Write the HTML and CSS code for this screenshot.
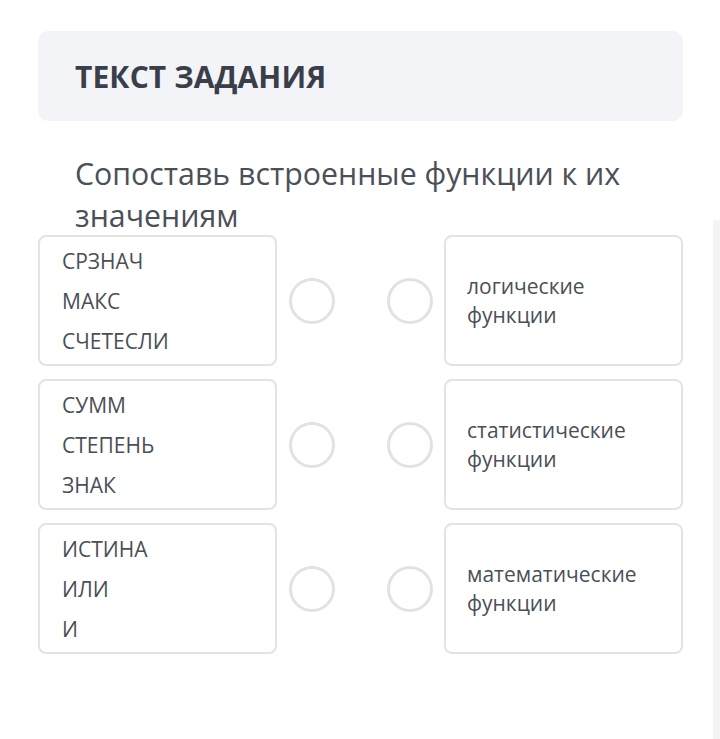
FILE: index.html
```html
<!DOCTYPE html>
<html lang="ru">
<head>
    <meta charset="UTF-8">
    <meta name="viewport" content="width=device-width, initial-scale=1.0">
    <title>Текст задания</title>
    <link rel="stylesheet" href="styles.css">
</head>
<body>
    <div class="page">
        <div class="task-header">
            <h1>ТЕКСТ ЗАДАНИЯ</h1>
        </div>

        <p class="question">Сопоставь встроенные функции к их значениям</p>

        <!-- Пары для сопоставления -->
        <div class="pairs">
            <div class="pair">
                <div class="card card-left">
                    <span>СРЗНАЧ</span>
                    <span>МАКС</span>
                    <span>СЧЕТЕСЛИ</span>
                </div>
                <div class="dots"><i class="dot"></i><i class="dot"></i></div>
                <div class="card card-right">логические функции</div>
            </div>
            <div class="pair">
                <div class="card card-left">
                    <span>СУММ</span>
                    <span>СТЕПЕНЬ</span>
                    <span>ЗНАК</span>
                </div>
                <div class="dots"><i class="dot"></i><i class="dot"></i></div>
                <div class="card card-right">статистические функции</div>
            </div>
            <div class="pair">
                <div class="card card-left">
                    <span>ИСТИНА</span>
                    <span>ИЛИ</span>
                    <span>И</span>
                </div>
                <div class="dots"><i class="dot"></i><i class="dot"></i></div>
                <div class="card card-right">математические функции</div>
            </div>
        </div>
    </div>
    <div class="scroll-strip"></div>
</body>
</html>
```

FILE: styles.css
```css
/* Общие стили */
body {
    margin: 0;
    font-family: 'Open Sans', 'Noto Sans', sans-serif;
    background: #fff;
    color: #454a52;
}

.page {
    padding: 31px 37px 0 38px;
}

.task-header {
    background: #f3f4f8;
    border-radius: 10px;
    height: 90px;
    display: flex;
    align-items: center;
    padding: 0 37px;
}

.task-header h1 {
    margin: 0;
    font-size: 30px;
    font-weight: bold;
    color: #393e48;
    letter-spacing: 0.1px;
}

.question {
    margin: 32px 0 -2px;
    padding: 0 40px 0 37px;
    font-size: 30.3px;
    line-height: 42px;
    color: #4b5058;
}

/* Пары */
.pairs {
    display: flex;
    flex-direction: column;
    gap: 13px;
}

.pair {
    display: flex;
    align-items: center;
}

.card {
    width: 239px;
    height: 131px;
    box-sizing: border-box;
    border: 2px solid #e3e3e3;
    border-radius: 8px;
    font-size: 21px;
    color: #4a4f56;
}

.card-left {
    display: flex;
    flex-direction: column;
    justify-content: center;
    padding-left: 22px;
    line-height: 40px;
}

.card-right {
    display: flex;
    align-items: center;
    padding: 0 30px 0 21px;
    line-height: 29px;
}

.dots {
    flex: 1;
    display: flex;
    justify-content: space-between;
    padding: 0 11px 0 12px;
}

.dot {
    width: 40px;
    height: 40px;
    border: 3px solid #e2e2e2;
    border-radius: 50%;
}

.scroll-strip {
    position: fixed;
    top: 220px;
    right: 0;
    width: 7px;
    bottom: 0;
    background: #f4f4f4;
}
```
